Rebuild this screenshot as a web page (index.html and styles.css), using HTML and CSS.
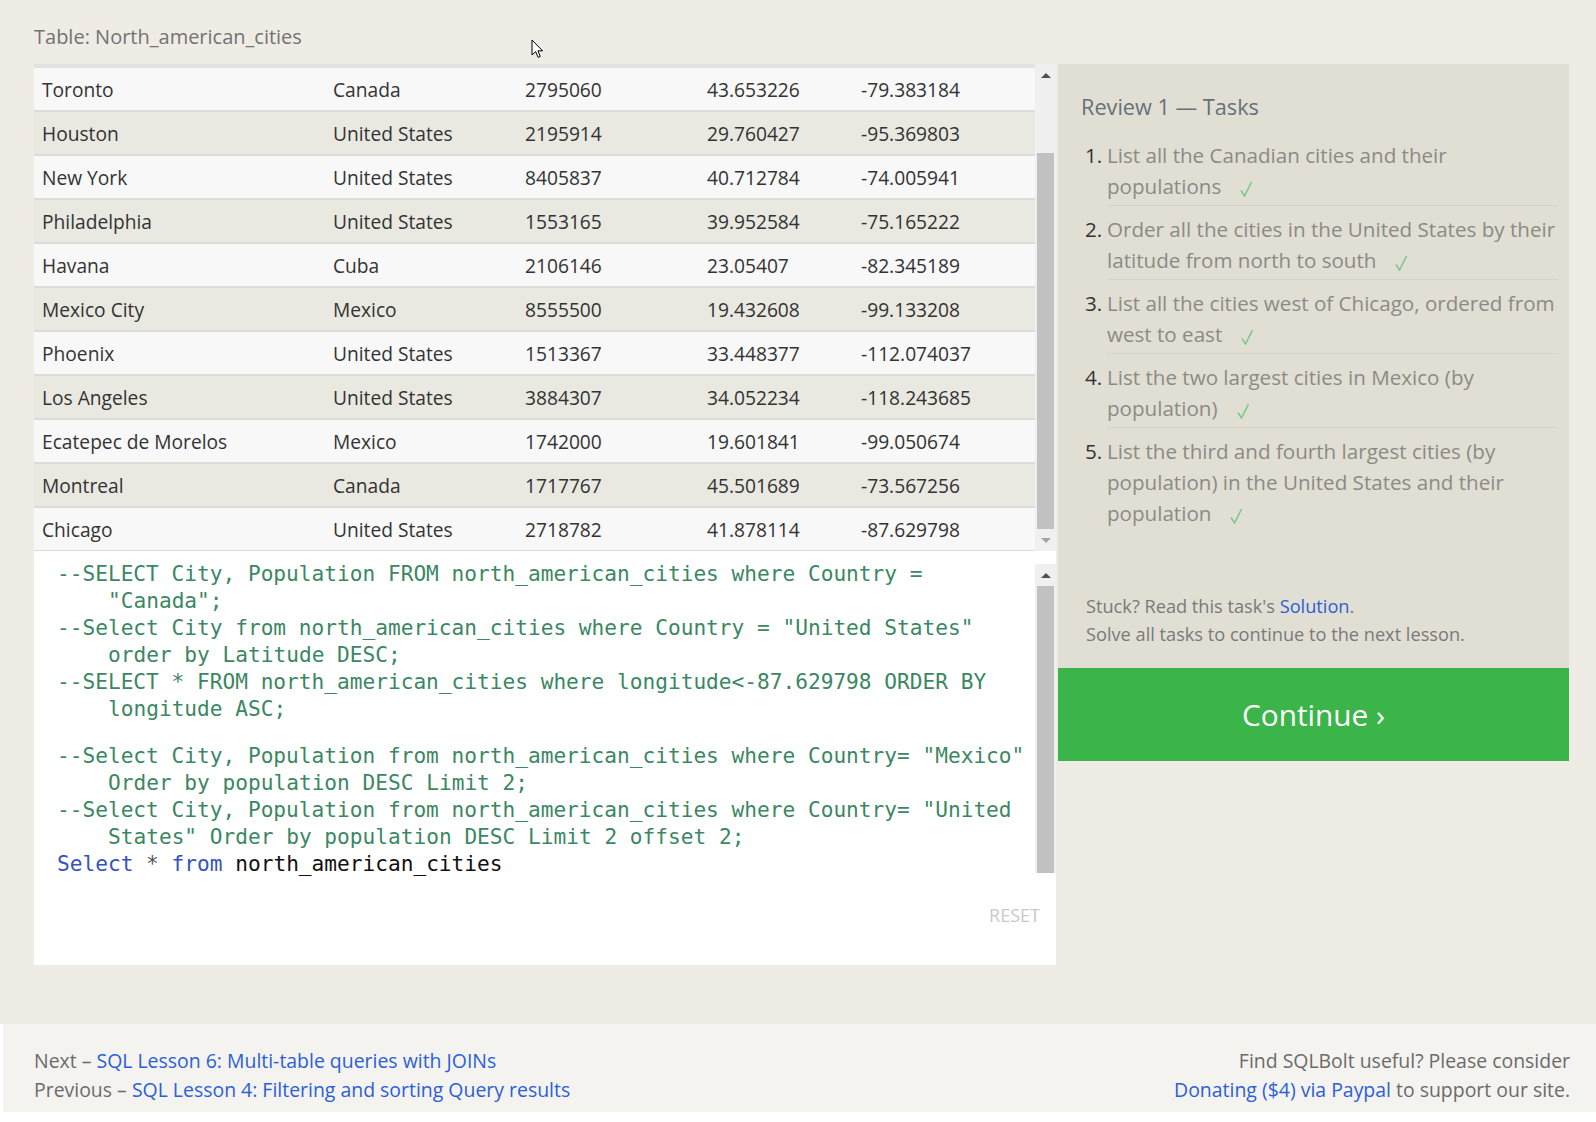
FILE: index.html
```html
<!DOCTYPE html>
<html lang="en">
<head>
<meta charset="utf-8">
<title>SQLBolt - Review 1</title>
<link rel="stylesheet" href="styles.css">
</head>
<body>
<div class="page">
  <div class="main">
    <div class="left">
      <div class="title">Table: North_american_cities</div>
      <div class="table-wrap">
        <div class="rows">
          <div class="row"><span>Toronto</span><span>Canada</span><span>2795060</span><span>43.653226</span><span>-79.383184</span></div>
          <div class="row"><span>Houston</span><span>United States</span><span>2195914</span><span>29.760427</span><span>-95.369803</span></div>
          <div class="row"><span>New York</span><span>United States</span><span>8405837</span><span>40.712784</span><span>-74.005941</span></div>
          <div class="row"><span>Philadelphia</span><span>United States</span><span>1553165</span><span>39.952584</span><span>-75.165222</span></div>
          <div class="row"><span>Havana</span><span>Cuba</span><span>2106146</span><span>23.05407</span><span>-82.345189</span></div>
          <div class="row"><span>Mexico City</span><span>Mexico</span><span>8555500</span><span>19.432608</span><span>-99.133208</span></div>
          <div class="row"><span>Phoenix</span><span>United States</span><span>1513367</span><span>33.448377</span><span>-112.074037</span></div>
          <div class="row"><span>Los Angeles</span><span>United States</span><span>3884307</span><span>34.052234</span><span>-118.243685</span></div>
          <div class="row"><span>Ecatepec de Morelos</span><span>Mexico</span><span>1742000</span><span>19.601841</span><span>-99.050674</span></div>
          <div class="row"><span>Montreal</span><span>Canada</span><span>1717767</span><span>45.501689</span><span>-73.567256</span></div>
          <div class="row"><span>Chicago</span><span>United States</span><span>2718782</span><span>41.878114</span><span>-87.629798</span></div>
        </div>
        <div class="vscroll table-scroll">
          <div class="sb-btn up"></div>
          <div class="sb-track"></div>
          <div class="sb-thumb"></div>
          <div class="sb-btn down"></div>
        </div>
      </div>
      <div class="editor">
        <div class="code">
          <div class="ln">--SELECT City, Population FROM north_american_cities where Country =</div>
          <div class="ln wrap">"Canada";</div>
          <div class="ln">--Select City from north_american_cities where Country = "United States"</div>
          <div class="ln wrap">order by Latitude DESC;</div>
          <div class="ln">--SELECT * FROM north_american_cities where longitude&lt;-87.629798 ORDER BY</div>
          <div class="ln wrap">longitude ASC;</div>
          <div class="blank"></div>
          <div class="ln">--Select City, Population from north_american_cities where Country= "Mexico"</div>
          <div class="ln wrap">Order by population DESC Limit 2;</div>
          <div class="ln">--Select City, Population from north_american_cities where Country= "United</div>
          <div class="ln wrap">States" Order by population DESC Limit 2 offset 2;</div>
          <div class="ln plain"><span class="kw">Select</span> <span class="op">*</span> <span class="kw">from</span> north_american_cities</div>
        </div>
        <div class="vscroll editor-scroll">
          <div class="sb-btn up"></div>
          <div class="sb-thumb"></div>
        </div>
        <div class="reset">RESET</div>
      </div>
    </div>

    <div class="panel">
      <div class="panel-body">
        <h2 class="panel-title">Review 1 — Tasks</h2>
        <ol class="tasks">
          <li><span class="num">1.</span><span class="txt">List all the Canadian cities and their<br>populations<svg class="check" viewBox="0 0 12 16"><polyline points="1,9.5 4.5,15 11.5,1"/></svg></span></li>
          <li><span class="num">2.</span><span class="txt">Order all the cities in the United States by their<br>latitude from north to south<svg class="check" viewBox="0 0 12 16"><polyline points="1,9.5 4.5,15 11.5,1"/></svg></span></li>
          <li><span class="num">3.</span><span class="txt">List all the cities west of Chicago, ordered from<br>west to east<svg class="check" viewBox="0 0 12 16"><polyline points="1,9.5 4.5,15 11.5,1"/></svg></span></li>
          <li><span class="num">4.</span><span class="txt">List the two largest cities in Mexico (by<br>population)<svg class="check" viewBox="0 0 12 16"><polyline points="1,9.5 4.5,15 11.5,1"/></svg></span></li>
          <li><span class="num">5.</span><span class="txt">List the third and fourth largest cities (by<br>population) in the United States and their<br>population<svg class="check" viewBox="0 0 12 16"><polyline points="1,9.5 4.5,15 11.5,1"/></svg></span></li>
        </ol>
        <div class="stuck">
          <div>Stuck? Read this task's <a href="#">Solution</a>.</div>
          <div>Solve all tasks to continue to the next lesson.</div>
        </div>
      </div>
      <a class="continue" href="#">Continue ›</a>
    </div>
  </div>

  <div class="footer">
    <div class="foot-left">
      <div>Next – <a href="#">SQL Lesson 6: Multi-table queries with JOINs</a></div>
      <div>Previous – <a href="#">SQL Lesson 4: Filtering and sorting Query results</a></div>
    </div>
    <div class="foot-right">
      <div>Find SQLBolt useful? Please consider</div>
      <div><a href="#">Donating ($4) via Paypal</a> to support our site.</div>
    </div>
  </div>
</div>
<svg class="cursor" viewBox="0 0 13 20" width="13" height="20"><path d="M1 1 L1 16 L4.6 12.6 L7.1 18.4 L9.3 17.4 L6.9 11.8 L11.6 11.8 Z"/></svg>
</body>
</html>
```

FILE: styles.css
```css
html, body {
  margin: 0;
  padding: 0;
}

body {
  background: #ffffff;
  font-family: "Open Sans", "Noto Sans", sans-serif;
  color: #333;
  width: 1596px;
  position: relative;
}

a {
  color: #2b5fd9;
  text-decoration: none;
}

.main {
  display: flex;
  align-items: flex-start;
  background: #efece5;
  height: 1024px;
  box-sizing: border-box;
}

.left {
  width: 1022px;
  margin-left: 34px;
}

.title {
  height: 64px;
  box-sizing: border-box;
  padding-top: 23px;
  font-size: 20px;
  line-height: 28px;
  color: #737373;
}

/* table */
.table-wrap {
  display: flex;
  height: 487px;
}

.rows {
  flex: 1;
  border-top: 4px solid #e2e2df;
  overflow: hidden;
}

.row {
  display: grid;
  grid-template-columns: 291px 192px 182px 154px 1fr;
  height: 42px;
  align-items: center;
  border-bottom: 2px solid #dddcd7;
  background: #f8f8f8;
  font-size: 19.2px;
  color: #333;
  white-space: nowrap;
}

.row:nth-child(even) {
  background: #e9e8e1;
}

.row span {
  padding-left: 8px;
  padding-top: 1px;
}

/* scrollbars */
.vscroll {
  width: 21px;
  background: #f0f0f0;
  display: flex;
  flex-direction: column;
}

.sb-btn {
  height: 22px;
  display: flex;
  align-items: center;
  justify-content: center;
  flex: none;
}

.sb-btn.up::before {
  content: "";
  border-left: 5px solid transparent;
  border-right: 5px solid transparent;
  border-bottom: 5px solid #505050;
}

.sb-btn.down::before {
  content: "";
  border-left: 5px solid transparent;
  border-right: 5px solid transparent;
  border-top: 5px solid #a3a3a3;
}

.sb-track {
  height: 67px;
}

.sb-thumb {
  margin: 0 2px;
  background: #c1c1c1;
}

.table-scroll .sb-thumb {
  height: 376px;
}

/* editor */
.editor {
  display: grid;
  grid-template-columns: 1fr 21px;
  grid-template-rows: auto auto;
  background: #ffffff;
  height: 414px;
  align-content: start;
}

.code {
  padding: 8.5px 0 0 23px;
  font-family: "DejaVu Sans Mono", "Liberation Mono", monospace;
  font-size: 21.15px;
  line-height: 27px;
  color: #3b8763;
}

.ln {
  white-space: pre;
  height: 27px;
}

.ln.wrap {
  padding-left: 51px;
}

.blank {
  height: 20px;
}

.ln.plain {
  color: #111;
}

.kw {
  color: #3552c0;
}

.op {
  color: #555;
}

.editor-scroll {
  margin-top: 13px;
  height: 309px;
  align-self: start;
}

.editor-scroll .sb-thumb {
  flex: 1;
}

.reset {
  grid-column: 1 / 3;
  text-align: right;
  margin-top: 26.5px;
  padding-right: 16px;
  font-size: 18px;
  line-height: 24px;
  color: #c9c9c9;
}

/* right panel */
.panel {
  width: 511px;
  margin-left: 2px;
  margin-top: 64px;
  background: #e1ded3;
}

.panel-body {
  padding: 28px 11px 20px 23px;
}

.panel-title {
  margin: 0 0 10px;
  font-weight: normal;
  font-size: 21.7px;
  line-height: 30px;
  color: #65707c;
}

.tasks {
  list-style: none;
  margin: 0;
  padding: 0 0 0 4px;
}

.tasks li {
  display: grid;
  grid-template-columns: 22px 1fr;
  font-size: 20.6px;
  line-height: 31px;
}

.num {
  padding-top: 8px;
  color: #333;
}

.txt {
  padding: 8px 0 3px;
  border-bottom: 1px solid #d6d3c9;
  color: #8b8b86;
  white-space: nowrap;
}

.tasks li:last-child .txt {
  border-bottom: none;
}

.check {
  width: 12px;
  height: 16px;
  margin-left: 19px;
  vertical-align: -3px;
  fill: none;
  stroke: #79c98b;
  stroke-width: 1.5;
}

.stuck {
  margin-top: 60px;
  padding-left: 5px;
  font-size: 18.2px;
  line-height: 28px;
  color: #7a7a7a;
}

.continue {
  display: flex;
  align-items: center;
  justify-content: center;
  height: 93px;
  background: #3bb54a;
  color: #ffffff;
  font-size: 29.8px;
}

/* footer */
.footer {
  margin-left: 3px;
  height: 88px;
  box-sizing: border-box;
  padding: 21.5px 26px 0 31px;
  background: #f5f3ef;
  display: flex;
  justify-content: space-between;
  font-size: 19.45px;
  line-height: 29px;
  color: #6b6b6b;
}

.foot-right {
  text-align: right;
}

/* mouse pointer captured in the screenshot */
.cursor {
  position: absolute;
  left: 531px;
  top: 39px;
  fill: #ffffff;
  stroke: #000000;
  stroke-width: 1;
}
```
